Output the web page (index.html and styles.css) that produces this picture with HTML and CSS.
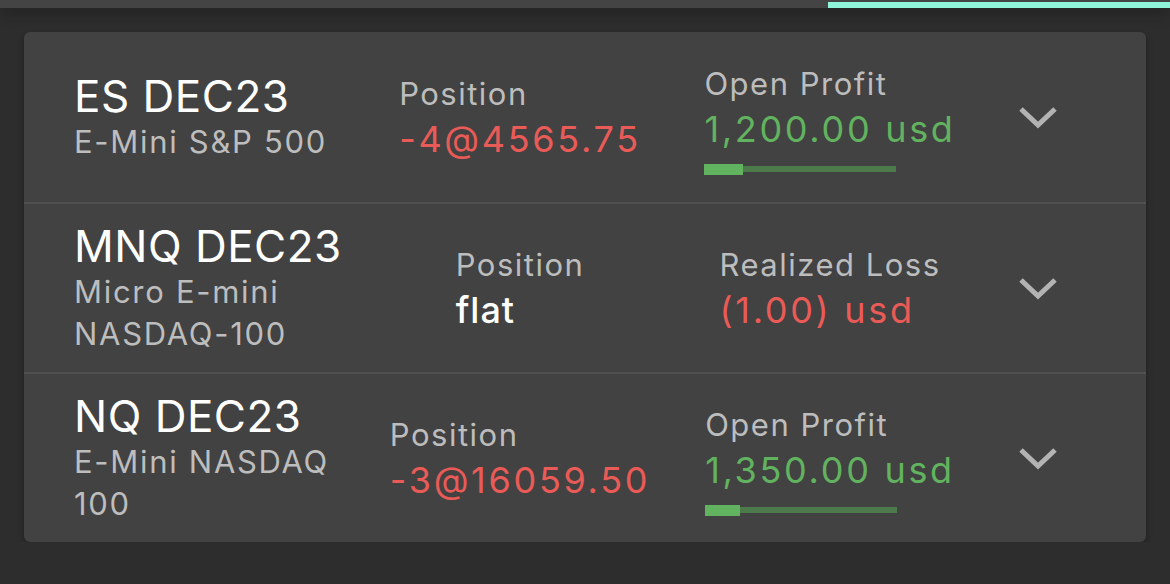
FILE: index.html
```html
<!DOCTYPE html>
<html lang="en">
<head>
  <meta charset="UTF-8">
  <meta name="viewport" content="width=device-width, initial-scale=1.0">
  <title>Positions</title>
  <link rel="stylesheet" href="styles.css">
</head>
<body>

<header class="topbar">
  <div class="progress"></div>
</header>

<div class="card">
  <div class="row">
    <div class="name">
      <h3>ES DEC23</h3>
      <p>E-Mini S&amp;P 500</p>
    </div>
    <div class="stat">
      <p class="label">Position</p>
      <p class="value red">-4@4565.75</p>
    </div>
    <div class="stat">
      <p class="label">Open Profit</p>
      <p class="value green">1,200.00 usd</p>
      <div class="bar"><div class="fill" style="width: 20%"></div></div>
    </div>
    <div class="toggle">
      <svg width="40" height="24" viewBox="0 0 40 24"><polyline points="3,4 20,20 37,4" fill="none" stroke="#b3b3b3" stroke-width="5"/></svg>
    </div>
  </div>

  <div class="row">
    <div class="name">
      <h3>MNQ DEC23</h3>
      <p>Micro E-mini NASDAQ-100</p>
    </div>
    <div class="stat">
      <p class="label">Position</p>
      <p class="value white">flat</p>
    </div>
    <div class="stat">
      <p class="label">Realized Loss</p>
      <p class="value red">(1.00) usd</p>
    </div>
    <div class="toggle">
      <svg width="40" height="24" viewBox="0 0 40 24"><polyline points="3,4 20,20 37,4" fill="none" stroke="#b3b3b3" stroke-width="5"/></svg>
    </div>
  </div>

  <div class="row">
    <div class="name">
      <h3>NQ DEC23</h3>
      <p>E-Mini NASDAQ 100</p>
    </div>
    <div class="stat">
      <p class="label">Position</p>
      <p class="value red">-3@16059.50</p>
    </div>
    <div class="stat">
      <p class="label">Open Profit</p>
      <p class="value green">1,350.00 usd</p>
      <div class="bar"><div class="fill" style="width: 18%"></div></div>
    </div>
    <div class="toggle">
      <svg width="40" height="24" viewBox="0 0 40 24"><polyline points="3,4 20,20 37,4" fill="none" stroke="#b3b3b3" stroke-width="5"/></svg>
    </div>
  </div>
</div>

</body>
</html>
```

FILE: styles.css
```css
body {
  font-family: Inter, "Noto Sans", sans-serif;
  margin: 0;
  padding: 0;
  background-color: #2d2d2d;
}
.topbar {
  height: 8px;
  background-color: #444;
  display: flex;
  justify-content: flex-end;
  align-items: flex-end;
  box-shadow: 0 4px 14px rgba(0, 0, 0, 0.35);
}
.progress {
  width: 342px;
  height: 6px;
  background-color: #8ff5d8;
}
.card {
  margin: 24px 24px 0;
  background-color: #424242;
  border-radius: 6px;
  box-shadow: 0 3px 6px rgba(0, 0, 0, 0.3);
}
.row {
  height: 170px;
  box-sizing: border-box;
  padding-left: 50px;
  display: grid;
  grid-template-columns: 280px 332px 288px 128px;
  align-items: center;
}
.row + .row {
  border-top: 2px solid #515151;
}
.name h3 {
  margin: 0;
  font-size: 44px;
  font-weight: 400;
  line-height: 50px;
  letter-spacing: 0.5px;
  color: #fff;
}
.name p {
  margin: 0;
  font-size: 31px;
  line-height: 42px;
  letter-spacing: 1.7px;
  color: #bdbdbd;
}
.stat {
  justify-self: center;
}
.stat p {
  margin: 0;
}
.label {
  font-size: 31px;
  line-height: 44px;
  letter-spacing: 1.5px;
  color: #bdbdbd;
}
.value {
  font-size: 36px;
  line-height: 46px;
  letter-spacing: 2.7px;
}
.red {
  color: #ea5b57;
}
.green {
  color: #62b35f;
}
.white {
  color: #fff;
  font-weight: 500;
  letter-spacing: 1px;
}
.bar {
  margin-top: 14px;
  width: 192px;
  height: 6px;
  background-color: #4d7a4b;
  position: relative;
}
.fill {
  position: absolute;
  left: 0;
  top: -2px;
  height: 11px;
  background-color: #62b35f;
}
.toggle {
  justify-self: center;
  display: flex;
}
```
